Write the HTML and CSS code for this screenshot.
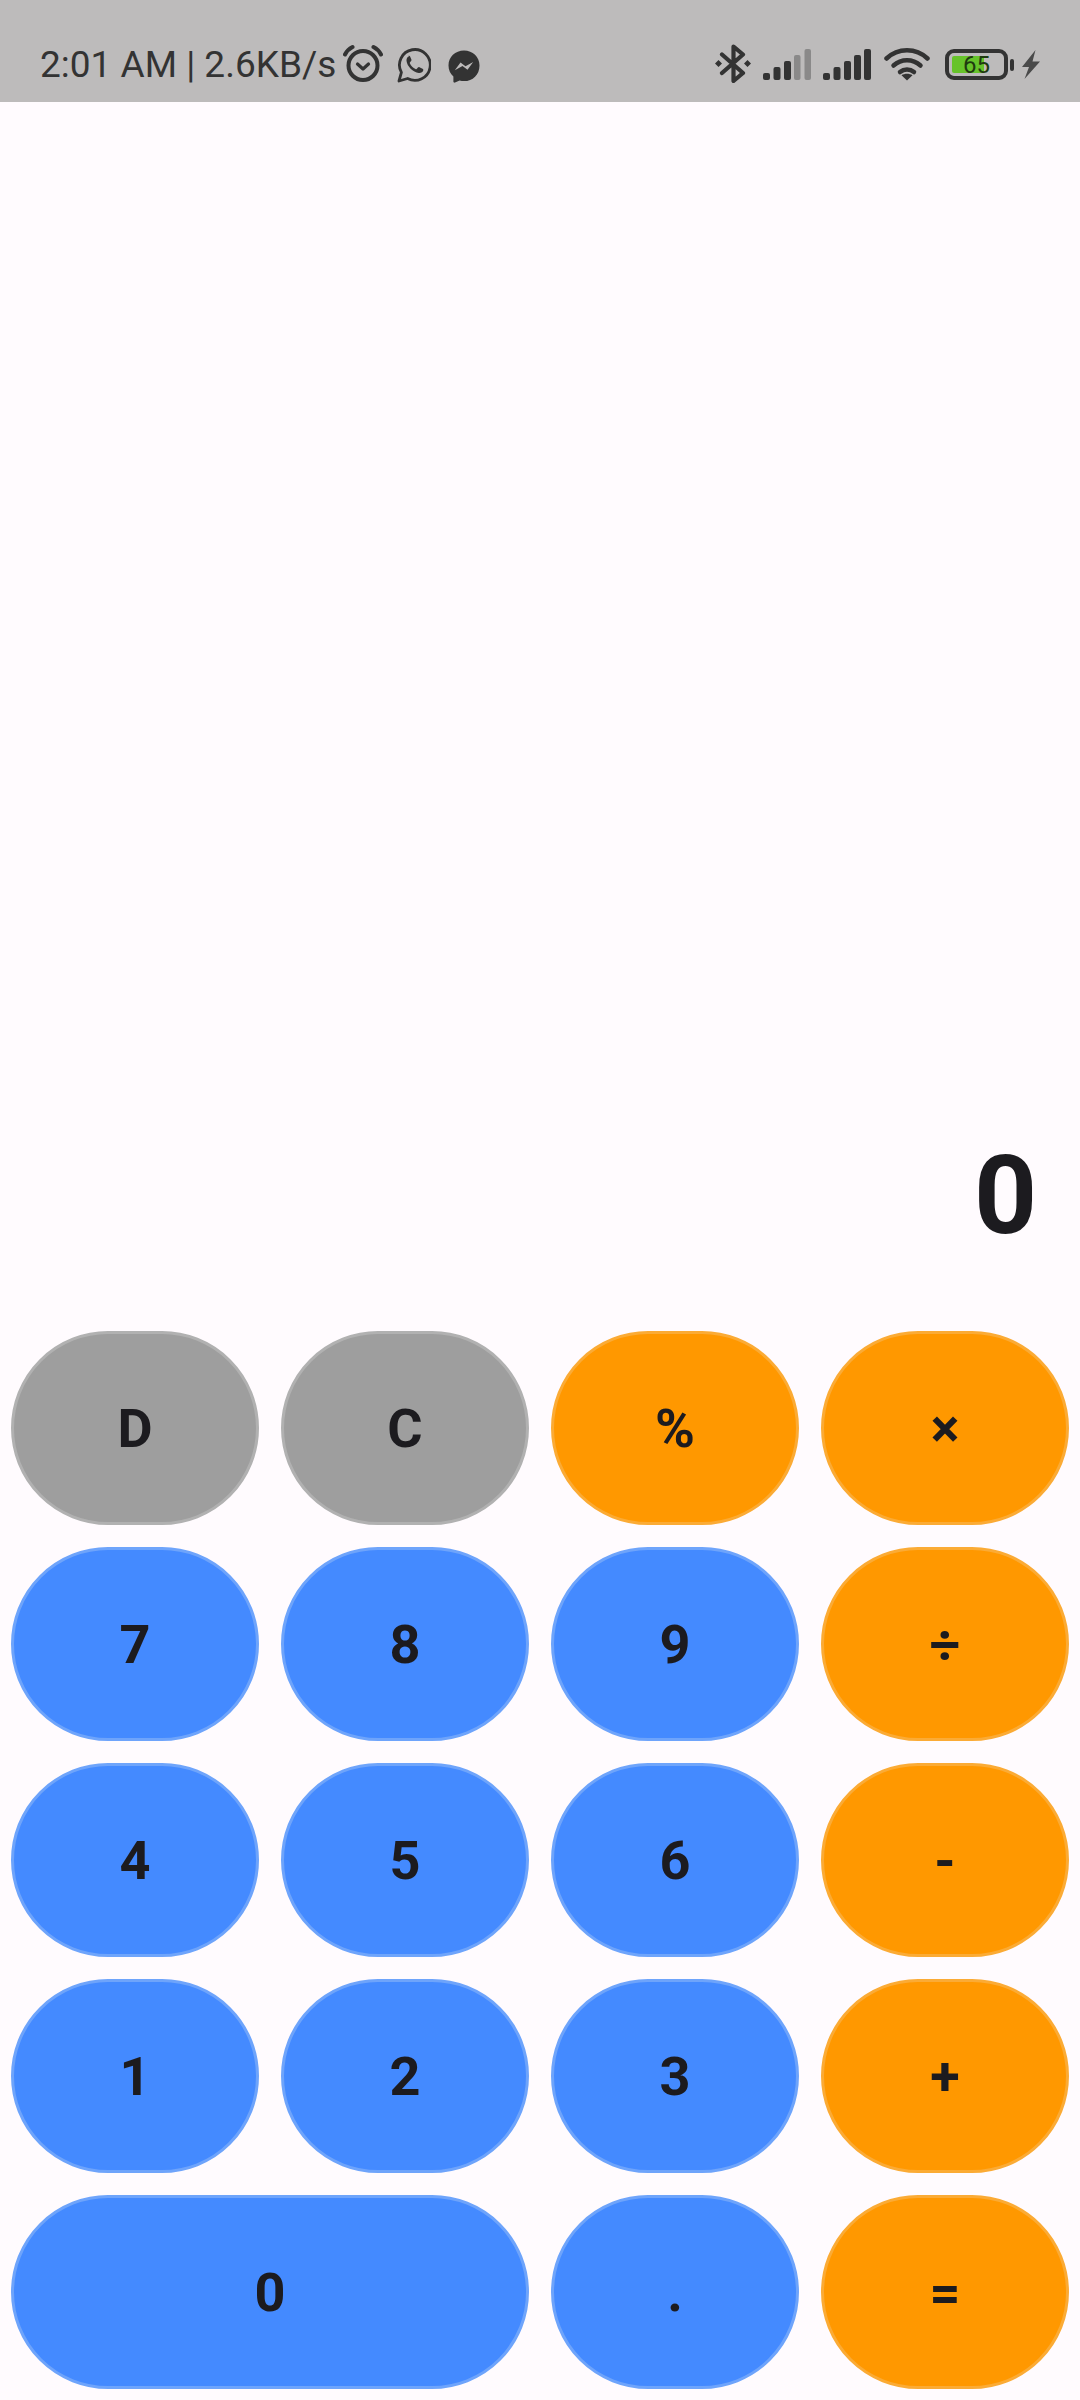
FILE: index.html
```html
<!DOCTYPE html>
<html lang="en">
<head>
    <meta charset="UTF-8">
    <meta name="viewport" content="width=device-width, initial-scale=1.0">
    <title>Calculator</title>
    <link rel="stylesheet" href="styles.css">
</head>
<body>
    <header class="status-bar">
        <div class="status-left">
            <span class="status-text">2:01 AM | 2.6KB/s</span>
            <svg class="icon-alarm" viewBox="0 0 40 38" fill="none" stroke="#333" stroke-width="4">
                <circle cx="20" cy="21.5" r="14.5"/>
                <path d="M14.500 20l5.500 5 5.500-5" stroke-width="3.200" stroke-linecap="round" stroke-linejoin="round"/>
                <path d="M2 10.500c1.800-3.600 4.200-5.800 7.500-7.500M38 10.500c-1.800-3.600-4.200-5.800-7.500-7.500" stroke-linecap="round"/>
            </svg>
            <svg class="icon-whatsapp" viewBox="0 0 34 36" fill="none">
                <path d="M2 34l2.400-8.600A15.400 15.400 0 1 1 10.600 31.500z" stroke="#333" stroke-width="2.800" stroke-linejoin="round"/>
                <path d="M12.300 9.300c-1.800.5-3 2.300-2.800 4.500.5 5.500 6.500 11.600 12.300 12.300 2.300.2 4-1 4.500-2.800.2-.8-.1-1.200-.8-1.600l-3-1.500c-.7-.3-1.100-.2-1.600.4l-1 1.200c-.4.500-.8.500-1.400.2-2.500-1.100-4.400-3-5.600-5.500-.2-.6-.2-1 .3-1.400l.9-1c.5-.5.500-1 .3-1.600l-1.300-2.900c-.3-.7-.8-.9-1.800-.6z" fill="#333"/>
            </svg>
            <svg class="icon-messenger" viewBox="0 0 32 33">
                <path d="M16 .5C7.200.5.500 6.900.500 15.400c0 4.500 1.800 8.300 4.900 11v5.200c0 .9.800 1.400 1.600 1l4.600-2.100c1.400.4 2.900.6 4.400.6 8.800 0 15.500-6.400 15.500-15.700C31.500 6.900 24.800.5 16 .5z" fill="#333"/>
                <path d="M6.800 20.300l5.700-7.700 5 3.700 7.700-4.300-5.700 7.700-5-3.700z" fill="#bdbbbb"/>
            </svg>
        </div>
        <div class="status-right">
            <svg class="icon-bluetooth" viewBox="0 0 36 39" fill="none">
                <path d="M7 10.500l21 18.500-9.500 8V2.500L28 10.500 7 29" stroke="#333" stroke-width="4.200" stroke-linejoin="round" stroke-linecap="round"/>
                <path d="M3.500 16l3.500 3.500-3.500 3.500L0 19.500zM32.500 16l3.500 3.500-3.500 3.500-3.500-3.500z" fill="#333"/>
            </svg>
            <svg class="icon-signal" viewBox="0 0 48 31" fill="#333">
                <rect x="0" y="24" width="7" height="7" rx="2"/>
                <rect x="10.500" y="18" width="7" height="13" rx="2"/>
                <rect x="21" y="12" width="7" height="19" rx="2"/>
                <g fill="#8a8989">
                    <rect x="31" y="6" width="6.500" height="25" rx="2"/>
                    <rect x="41.500" y="0" width="6.500" height="31" rx="2"/>
                </g>
            </svg>
            <svg class="icon-signal" viewBox="0 0 48 31" fill="#333">
                <rect x="0" y="24" width="7" height="7" rx="2"/>
                <rect x="10.500" y="18" width="7" height="13" rx="2"/>
                <rect x="21" y="12" width="7" height="19" rx="2"/>
                <rect x="31" y="6" width="7" height="25" rx="2"/>
                <rect x="41" y="0" width="7" height="31" rx="2"/>
            </svg>
            <svg class="icon-wifi" viewBox="0 0 46 34" fill="none" stroke="#333" stroke-width="4.500" stroke-linecap="round">
                <path d="M2.500 11.500c11.500-11 29.500-11 41 0"/>
                <path d="M9.500 18.500c7.800-7 19.200-7 27 0"/>
                <path d="M16 25c4.100-3.500 9.900-3.500 14 0"/>
                <path d="M23 33.500l-5.500-5.200c3.200-2 7.800-2 11 0z" fill="#333" stroke="none"/>
            </svg>
            <div class="battery">
                <div class="battery-level">65</div>
            </div>
            <div class="battery-nub"></div>
            <svg class="icon-bolt" viewBox="0 0 19 29">
                <path d="M14.500 0L1 17h7L3.500 29 19 11.500h-7.500z" fill="#4a4a4a"/>
            </svg>
        </div>
    </header>

    <main class="calculator">
        <div class="display">0</div>
        <div class="keypad">
            <button class="key key-gray">D</button>
            <button class="key key-gray">C</button>
            <button class="key key-orange">%</button>
            <button class="key key-orange">×</button>
            <button class="key key-blue">7</button>
            <button class="key key-blue">8</button>
            <button class="key key-blue">9</button>
            <button class="key key-orange">÷</button>
            <button class="key key-blue">4</button>
            <button class="key key-blue">5</button>
            <button class="key key-blue">6</button>
            <button class="key key-orange">-</button>
            <button class="key key-blue">1</button>
            <button class="key key-blue">2</button>
            <button class="key key-blue">3</button>
            <button class="key key-orange">+</button>
            <button class="key key-blue key-wide">0</button>
            <button class="key key-blue">.</button>
            <button class="key key-orange">=</button>
        </div>
    </main>
</body>
</html>
```

FILE: styles.css
```css
* {
    box-sizing: border-box;
}
body {
    margin: 0;
    height: 2400px;
    display: flex;
    flex-direction: column;
    font-family: 'Roboto', sans-serif;
    background: #fffbfe;
    color: #1c1b1f;
}
.status-bar {
    height: 102px;
    flex: none;
    background: #bdbbbb;
    color: #333;
    display: flex;
    justify-content: space-between;
    padding: 44px 40px 0 40px;
}
.status-left, .status-right {
    display: flex;
    align-items: flex-start;
}
.status-text {
    font-size: 37px;
    line-height: 42px;
}
.icon-alarm {
    width: 40px;
    height: 38px;
    margin-left: 7px;
}
.icon-whatsapp {
    width: 34px;
    height: 36px;
    margin: 3px 0 0 14px;
}
.icon-messenger {
    width: 32px;
    height: 33px;
    margin: 6px 0 0 17px;
}
.icon-bluetooth {
    width: 36px;
    height: 39px;
}
.icon-signal {
    width: 48px;
    height: 31px;
    margin: 5px 0 0 12px;
}
.icon-wifi {
    width: 46px;
    height: 34px;
    margin: 3px 0 0 13px;
}
.battery {
    width: 63px;
    height: 31px;
    margin: 5px 0 0 15px;
    border: 4px solid #333;
    border-radius: 9px;
    padding: 3px;
}
.battery-level {
    height: 100%;
    font-size: 24px;
    line-height: 18px;
    text-align: center;
    color: #1f3a10;
    background: linear-gradient(90deg, #66c32a 65%, transparent 65%);
    border-radius: 2px;
}
.battery-nub {
    width: 4px;
    height: 12px;
    margin: 15px 0 0 2px;
    background: #333;
    border-radius: 2px;
}
.icon-bolt {
    width: 19px;
    height: 29px;
    margin: 6px 0 0 7px;
}
.calculator {
    flex: 1;
    display: flex;
    flex-direction: column;
    justify-content: flex-end;
    padding: 0 11px 11px 11px;
}
.display {
    font-size: 110px;
    font-weight: 700;
    line-height: 130px;
    text-align: right;
    padding-right: 32px;
    margin-bottom: 70px;
}
.keypad {
    display: grid;
    grid-template-columns: repeat(4, 248px);
    grid-auto-rows: 194px;
    gap: 22px;
}
.key {
    border-radius: 97px;
    border: 3px solid;
    font-family: 'Roboto', sans-serif;
    font-size: 54px;
    font-weight: 700;
    color: #1c1b1f;
    padding: 0;
}
.key-gray {
    background: #9e9e9e;
    border-color: #b1b1b1;
}
.key-blue {
    background: #448aff;
    border-color: #6ea4fb;
}
.key-orange {
    background: #ff9800;
    border-color: #fbab35;
}
.key-wide {
    grid-column: span 2;
}
```
